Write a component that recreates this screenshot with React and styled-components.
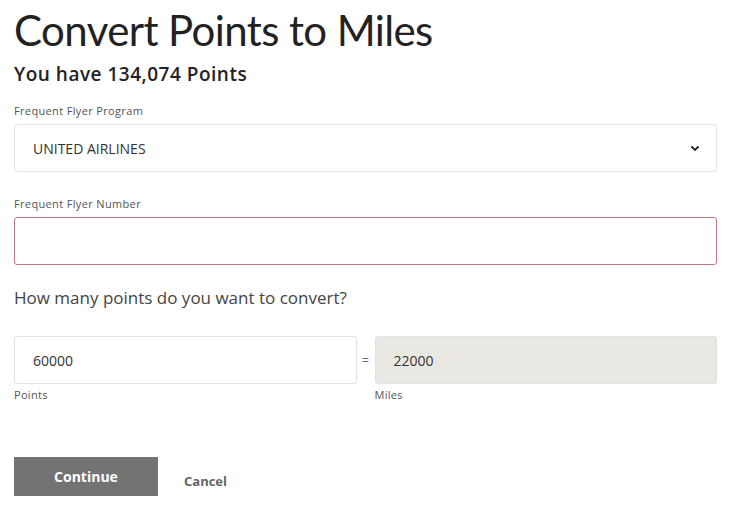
import React from "react";
import styled, { createGlobalStyle } from "styled-components";

const Global = createGlobalStyle`
  html, body { margin: 0; padding: 0; background: #fff; }
  body { font-family: "Open Sans", Lato, Arial, sans-serif; color: #222; }
  * { box-sizing: border-box; }
`;

const Page = styled.div`
  padding: 6px 15px 0 14px;
  width: 732px;
`;

const Title = styled.h1`
  margin: 0;
  font-family: Lato, "Open Sans", Arial, sans-serif;
  font-size: 42px;
  font-weight: 400;
  line-height: 48px;
  color: #222;
  letter-spacing: -0.6px;
`;

const Subtitle = styled.h2`
  margin: 8px 0 0;
  font-size: 19px;
  font-weight: 600;
  line-height: 24px;
  color: #222;
  letter-spacing: 0.5px;
`;

const Field = styled.div`
  margin-top: ${(p) => p.$top}px;
  display: flex;
  flex-direction: column;
`;

const Label = styled.label`
  font-size: 11px;
  line-height: 14px;
  color: #555;
  letter-spacing: 0.35px;
  margin-bottom: 6px;
`;

const Box = styled.div`
  height: 48px;
  border: 1px solid ${(p) => (p.$error ? "#c27a82" : "#e2e2e2")};
  border-radius: 3px;
  background: ${(p) => (p.$readonly ? "#e9e8e3" : "#fff")};
  display: flex;
  align-items: center;
  padding: 0 18px;
  font-size: 14px;
  color: #333;
`;

const SelectBox = styled(Box)`
  justify-content: space-between;
  padding-right: 16px;
`;

const Question = styled.p`
  margin: 22px 0 0;
  font-size: 17px;
  line-height: 22px;
  color: #444;
`;

const ConvertRow = styled.div`
  margin-top: 27px;
  display: flex;
  align-items: flex-start;
`;

const Col = styled.div`
  flex: 1;
  display: flex;
  flex-direction: column;
`;

const Equals = styled.span`
  width: 18px;
  height: 48px;
  display: flex;
  align-items: center;
  justify-content: center;
  font-size: 12px;
  color: #666;
`;

const SubLabel = styled.span`
  margin-top: 4px;
  font-size: 11px;
  line-height: 14px;
  letter-spacing: 0.3px;
  color: #555;
`;

const Actions = styled.div`
  margin-top: 55px;
  display: flex;
  align-items: center;
  gap: 26px;
`;

const PrimaryButton = styled.button`
  width: 144px;
  height: 39px;
  border: none;
  background: #737373;
  color: #fff;
  font-family: inherit;
  font-size: 14px;
  font-weight: 700;
  cursor: pointer;
`;

const LinkButton = styled.button`
  border: none;
  background: none;
  padding: 0;
  margin-top: 8px;
  font-family: inherit;
  font-size: 13px;
  font-weight: 700;
  color: #666;
`;

const Chevron = () => (
  <svg width="10" height="7" viewBox="0 0 10 7">
    <path d="M1.5 1.5 L5 5 L8.5 1.5" fill="none" stroke="#222" strokeWidth="1.8" />
  </svg>
);

export default function App() {
  return (
    <>
      <Global />
      <Page>
        <Title>Convert Points to Miles</Title>
        <Subtitle>You have 134,074 Points</Subtitle>
        <Field $top={18}>
          <Label>Frequent Flyer Program</Label>
          <SelectBox>
            <span>UNITED AIRLINES</span>
            <Chevron />
          </SelectBox>
        </Field>
        <Field $top={25}>
          <Label>Frequent Flyer Number</Label>
          <Box $error />
        </Field>
        <Question>How many points do you want to convert?</Question>
        <ConvertRow>
          <Col>
            <Box>60000</Box>
            <SubLabel>Points</SubLabel>
          </Col>
          <Equals>=</Equals>
          <Col>
            <Box $readonly>22000</Box>
            <SubLabel>Miles</SubLabel>
          </Col>
        </ConvertRow>
        <Actions>
          <PrimaryButton>Continue</PrimaryButton>
          <LinkButton>Cancel</LinkButton>
        </Actions>
      </Page>
    </>
  );
}
